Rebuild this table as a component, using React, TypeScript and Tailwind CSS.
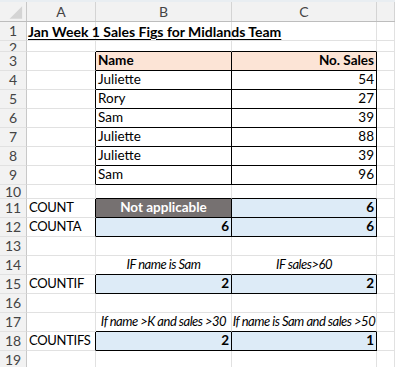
import React from "react";

type Cell = {
  text?: string;
  align?: "left" | "right" | "center";
  bold?: boolean;
  italic?: boolean;
  fill?: string;
  white?: boolean;
  boxed?: boolean;
};

type Row = { n: number; h: string; a?: Cell; b?: Cell; c?: Cell };

const blue = "bg-[#ddebf7]";

const rows: Row[] = [
  { n: 1, h: "h-[19px]" },
  { n: 2, h: "h-[11px]" },
  {
    n: 3,
    h: "h-[19px]",
    b: { text: "Name", bold: true, fill: "bg-[#fce4d6]", boxed: true },
    c: { text: "No. Sales", bold: true, align: "right", fill: "bg-[#fce4d6]", boxed: true },
  },
  { n: 4, h: "h-[19px]", b: { text: "Juliette", boxed: true }, c: { text: "54", align: "right", boxed: true } },
  { n: 5, h: "h-[19px]", b: { text: "Rory", boxed: true }, c: { text: "27", align: "right", boxed: true } },
  { n: 6, h: "h-[19px]", b: { text: "Sam", boxed: true }, c: { text: "39", align: "right", boxed: true } },
  { n: 7, h: "h-[19px]", b: { text: "Juliette", boxed: true }, c: { text: "88", align: "right", boxed: true } },
  { n: 8, h: "h-[19px]", b: { text: "Juliette", boxed: true }, c: { text: "39", align: "right", boxed: true } },
  { n: 9, h: "h-[19px]", b: { text: "Sam", boxed: true }, c: { text: "96", align: "right", boxed: true } },
  { n: 10, h: "h-[14px]" },
  {
    n: 11,
    h: "h-[19px]",
    a: { text: "COUNT" },
    b: { text: "Not applicable", bold: true, align: "center", fill: "bg-[#767171]", white: true, boxed: true },
    c: { text: "6", bold: true, align: "right", fill: blue, boxed: true },
  },
  {
    n: 12,
    h: "h-[19px]",
    a: { text: "COUNTA" },
    b: { text: "6", bold: true, align: "right", fill: blue, boxed: true },
    c: { text: "6", bold: true, align: "right", fill: blue, boxed: true },
  },
  { n: 13, h: "h-[19px]" },
  {
    n: 14,
    h: "h-[19px]",
    b: { text: "IF name is Sam", italic: true, align: "center" },
    c: { text: "IF sales>60", italic: true, align: "center" },
  },
  {
    n: 15,
    h: "h-[19px]",
    a: { text: "COUNTIF" },
    b: { text: "2", bold: true, align: "right", fill: blue, boxed: true },
    c: { text: "2", bold: true, align: "right", fill: blue, boxed: true },
  },
  { n: 16, h: "h-[19px]" },
  {
    n: 17,
    h: "h-[19px]",
    b: { text: "If name >K and sales >30", italic: true, align: "center" },
    c: { text: "If name is Sam and sales >50", italic: true, align: "center" },
  },
  {
    n: 18,
    h: "h-[19px]",
    a: { text: "COUNTIFS" },
    b: { text: "2", bold: true, align: "right", fill: blue, boxed: true },
    c: { text: "1", bold: true, align: "right", fill: blue, boxed: true },
  },
  { n: 19, h: "h-[19px]" },
];

const widths = ["w-[69px]", "w-[136px]", "w-[145px]", "w-[18px]"];

function isBoxed(r: number, col: number) {
  const row = rows[r];
  if (!row) return false;
  const cell = col === 1 ? row.b : col === 2 ? row.c : undefined;
  return !!cell?.boxed;
}

function GridCell({ r, col, cell }: { r: number; col: number; cell?: Cell }) {
  const rightBlack = isBoxed(r, col) || isBoxed(r, col + 1);
  const bottomBlack = isBoxed(r, col) || isBoxed(r + 1, col);
  const justify =
    cell?.align === "right" ? "justify-end pr-[2px]" : cell?.align === "center" ? "justify-center" : "justify-start pl-[2px]";
  return (
    <div
      className={`${widths[col]} shrink-0 h-full border-r border-b flex items-end pb-[1px] whitespace-nowrap ${
        rightBlack ? "border-r-black" : "border-r-[#e1e1e1]"
      } ${bottomBlack ? "border-b-black" : "border-b-[#e1e1e1]"} ${cell?.fill ?? "bg-white"} ${justify}`}
    >
      {cell?.text && (
        <span
          className={`leading-[17px] ${cell.bold ? "font-bold" : ""} ${
            cell.italic ? "italic text-[13px] tracking-[-0.5px]" : ""
          } ${col === 0 ? "text-[13px] tracking-[-0.3px]" : ""} ${cell.white ? "text-white" : "text-black"}`}
        >
          {cell.text}
        </span>
      )}
    </div>
  );
}

export default function App() {
  return (
    <div className="w-[395px] h-[367px] overflow-hidden bg-white text-[13.5px] font-['Lato','Liberation_Sans',sans-serif]">
      <div className="h-[2px] bg-[#e9eef2]" />
      <div className="flex h-[20px] bg-[#f2f2f2] border-b border-b-[#bdbdbd] text-[#444] text-[14px]">
        <div className="w-[27px] shrink-0 border-r border-r-[#c8c8c8] flex items-center justify-center">
          <svg width="27" height="19" viewBox="0 0 27 19">
            <polygon points="10,17 23,17 23,4" fill="#d4d4d4" />
          </svg>
        </div>
        {["A", "B", "C", ""].map((l, i) => (
          <div
            key={i}
            className={`${widths[i]} shrink-0 border-r border-r-[#d4d4d4] flex items-center justify-center`}
          >
            {l}
          </div>
        ))}
      </div>
      {rows.map((row, r) => (
        <div key={row.n} className={`flex ${row.h} relative`}>
          <div
            className={`w-[27px] shrink-0 h-full overflow-hidden bg-[#f2f2f2] border-r border-r-[#c8c8c8] border-b border-b-[#e1e1e1] text-[#444] text-[14px] flex justify-center ${
              row.h === "h-[19px]" ? "items-center" : "items-start"
            }`}
          >
            <span className={row.n === 2 ? "leading-[13px]" : row.n === 10 ? "leading-[13px]" : "leading-[18px]"}>
              {row.n}
            </span>
          </div>
          <GridCell r={r} col={0} cell={row.a} />
          <GridCell r={r} col={1} cell={row.b} />
          <GridCell r={r} col={2} cell={row.c} />
          <GridCell r={r} col={3} />
          {row.n === 1 && (
            <span className="absolute left-[28px] bottom-[1px] leading-[17px] text-[14px] font-bold underline underline-offset-[2px] whitespace-nowrap text-black">
              Jan Week 1 Sales Figs for Midlands Team
            </span>
          )}
        </div>
      ))}
    </div>
  );
}
